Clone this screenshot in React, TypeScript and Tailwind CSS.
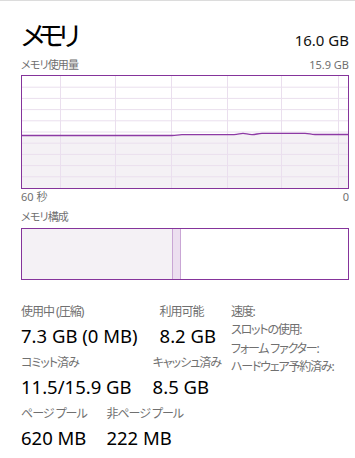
import React from "react"

const FONT = "font-['Noto_Sans','Noto_Sans_CJK_JP',sans-serif] [font-feature-settings:'palt']"

// memory usage line, in inner-box coords (326 x 112)
const LINE =
  "M0 59.5 L150 59.5 C154 59.5 156 58.7 160 58.7 L212 58.7 C216 58.7 218 57.4 221 57.4 C224 57.4 226 58.6 230 58.6 C234 58.6 236 57.4 240 57.4 L283 57.4 C287 57.4 289 58.5 293 58.5 L326 58.5"

const UsageGraph = () => {
  const vLines = [38, 93, 149, 205, 259, 316]
  const hLines = [1, 2, 3, 4, 5, 6, 7, 8, 9].map((k) => k * 11.2)
  return (
    <div className="h-[114px] border border-[#85349b] bg-white">
      <svg width="326" height="112" className="block">
        <path d={LINE + " L326 112 L0 112 Z"} fill="#f4f1f5" />
        {hLines.map((y) => (
          <line key={y} x1="0" x2="326" y1={y} y2={y} stroke="#eadfee" strokeWidth="1" />
        ))}
        {vLines.map((x) => (
          <line key={x} x1={x + 0.5} x2={x + 0.5} y1="0" y2="112" stroke="#eadfee" strokeWidth="1" />
        ))}
        <path d={LINE} fill="none" stroke="#8d3aa5" strokeWidth="1.3" />
      </svg>
    </div>
  )
}

// label doesn't widen the column, the value does
const Stat = ({ label, value }: { label: string; value: string }) => (
  <div className="flex flex-col">
    <div className="h-[18px] w-0 text-[12px] leading-[18px] tracking-[-1px] text-[#707070] whitespace-nowrap">
      {label}
    </div>
    <div className="h-[29px] text-[18.5px] leading-[29px] text-black whitespace-nowrap">{value}</div>
  </div>
)

export default function App() {
  return (
    <div className={`w-[355px] h-[458px] bg-white border-t border-[#dcdcdc] overflow-hidden ${FONT}`}>
      <div className="pl-[21px] pr-[6px]">
        <div className="mt-[20px] flex items-baseline justify-between h-[30px]">
          <div className="text-[27px] leading-[30px] tracking-[-6px] text-black">メモリ</div>
          <div className="text-[15px] leading-[30px] text-[#111]">16.0 GB</div>
        </div>

        <div className="mt-[6px] flex justify-between h-[16px] text-[11px] leading-[16px] text-[#707070]">
          <span className="tracking-[-0.8px]">メモリ使用量</span>
          <span>15.9 GB</span>
        </div>
        <div className="mt-[2px]">
          <UsageGraph />
        </div>
        <div className="flex justify-between h-[16px] text-[11px] leading-[16px] text-[#707070]">
          <span>60 秒</span>
          <span>0</span>
        </div>

        <div className="mt-[4px] h-[16px] text-[11px] leading-[16px] tracking-[-0.8px] text-[#707070]">メモリ構成</div>
        <div className="mt-[3px] h-[52px] border border-[#85349b] flex bg-white">
          <div className="w-[151px] bg-[#f4f1f5] border-r border-[#c9a6d5]" />
          <div className="w-[8px] bg-[#ecdff0] border-r border-[#c9a6d5]" />
          <div className="flex-1" />
        </div>

        <div className="mt-[23px] flex">
          <div className="w-[210px] flex flex-col gap-[4px]">
            <div className="flex gap-[22px]">
              <Stat label="使用中 (圧縮)" value="7.3 GB (0 MB)" />
              <Stat label="利用可能" value="8.2 GB" />
            </div>
            <div className="flex gap-[21px]">
              <Stat label="コミット済み" value="11.5/15.9 GB" />
              <Stat label="キャッシュ済み" value="8.5 GB" />
            </div>
            <div className="flex gap-[20px]">
              <Stat label="ページ プール" value="620 MB" />
              <Stat label="非ページ プール" value="222 MB" />
            </div>
          </div>
          <div className="flex flex-col text-[12px] leading-[18.3px] tracking-[-1.2px] text-[#707070] whitespace-nowrap">
            <span>速度:</span>
            <span>スロットの使用:</span>
            <span>フォーム ファクター:</span>
            <span>ハードウェア予約済み:</span>
          </div>
        </div>
      </div>
    </div>
  )
}
